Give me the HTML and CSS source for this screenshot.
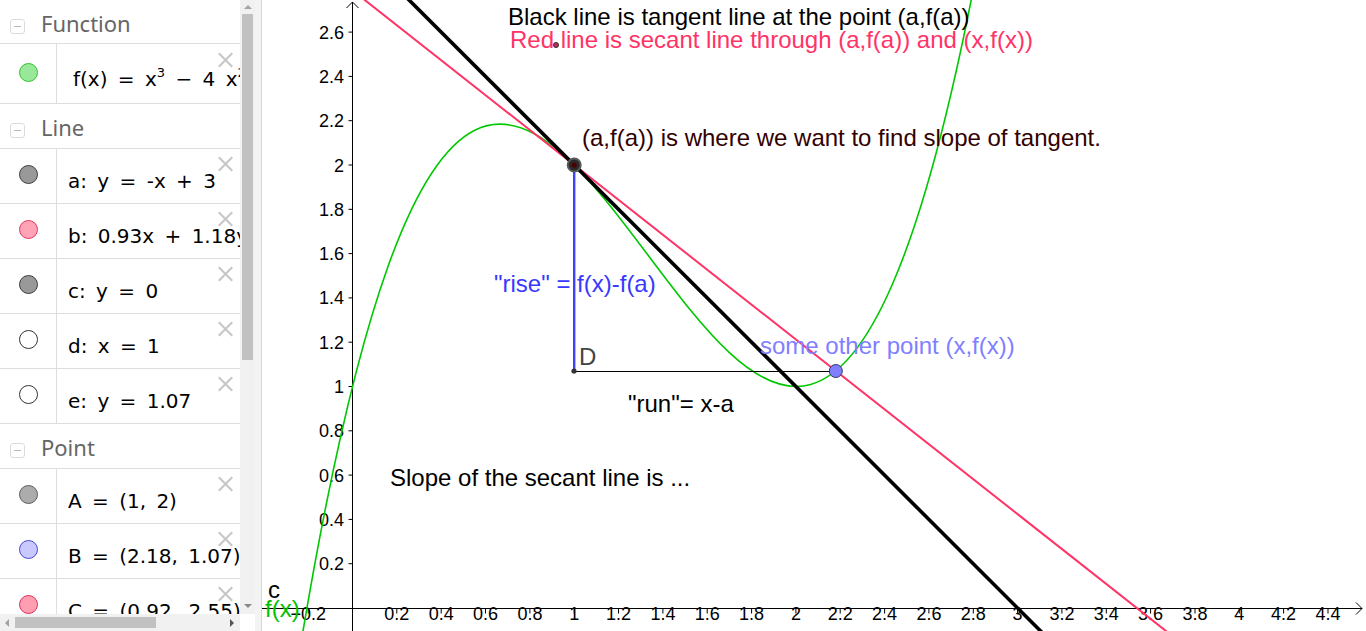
FILE: index.html
```html
<!DOCTYPE html>
<html lang="en">
<head>
<meta charset="utf-8">
<title>Tangent and secant</title>
<link rel="stylesheet" href="styles.css">
</head>
<body>
<div class="app">
  <div class="algebra">
    <div class="list">
      <div class="ghead first"><span class="toggle"></span><span class="gtitle">Function</span></div>
      <div class="item tall"><div class="marker"><span class="dot c-green"></span></div><div class="expr">f(x) = x<sup>3</sup> − 4 x<sup>2</sup> + 4 x + 1</div><span class="close"></span></div>

      <div class="ghead"><span class="toggle"></span><span class="gtitle">Line</span></div>
      <div class="item"><div class="marker"><span class="dot c-grey"></span></div><div class="expr">a: y = -x + 3</div><span class="close"></span></div>
      <div class="item"><div class="marker"><span class="dot c-pink"></span></div><div class="expr">b: 0.93x + 1.18y = 3.29</div><span class="close"></span></div>
      <div class="item"><div class="marker"><span class="dot c-grey"></span></div><div class="expr">c: y = 0</div><span class="close"></span></div>
      <div class="item"><div class="marker"><span class="dot c-hidden"></span></div><div class="expr">d: x = 1</div><span class="close"></span></div>
      <div class="item"><div class="marker"><span class="dot c-hidden"></span></div><div class="expr">e: y = 1.07</div><span class="close"></span></div>

      <div class="ghead"><span class="toggle"></span><span class="gtitle">Point</span></div>
      <div class="item"><div class="marker"><span class="dot c-lgrey"></span></div><div class="expr">A = (1, 2)</div><span class="close"></span></div>
      <div class="item"><div class="marker"><span class="dot c-blue"></span></div><div class="expr">B = (2.18, 1.07)</div><span class="close"></span></div>
      <div class="item"><div class="marker"><span class="dot c-rose"></span></div><div class="expr">C = (0.92, 2.55)</div><span class="close"></span></div>
    </div>
    <div class="vscroll"><span class="arr-up"></span><span class="vthumb"></span><span class="arr-down"></span></div>
    <div class="hscroll"><span class="arr-left"></span><span class="hthumb"></span><span class="arr-right"></span></div>
    <div class="corner"></div>
  </div>
  <div class="divider"></div>
  <div class="graphics">
    <svg class="plot" viewBox="262 0 1104 631" width="1104" height="631" xmlns="http://www.w3.org/2000/svg">
      <g class="axes">
        <line x1="262" y1="608.5" x2="1362" y2="608.5"/>
        <polyline points="1356,602.5 1362,608.5 1356,614.5"/>
        <line x1="352.5" y1="631" x2="352.5" y2="2"/>
        <polyline points="346.5,8 352.5,2 358.5,8"/>
        <path d="M348.5,563.7h4M348.5,519.4h4M348.5,475.1h4M348.5,430.8h4M348.5,386.5h4M348.5,342.2h4M348.5,297.9h4M348.5,253.6h4M348.5,209.3h4M348.5,165h4M348.5,120.7h4M348.5,76.4h4M348.5,32.1h4"/>
        <path d="M308.2,609v4.5M396.8,609v4.5M441.2,609v4.5M485.5,609v4.5M529.9,609v4.5M574.2,609v4.5M618.5,609v4.5M662.9,609v4.5M707.2,609v4.5M751.6,609v4.5M795.9,609v4.5M840.2,609v4.5M884.6,609v4.5M928.9,609v4.5M973.3,609v4.5M1017.6,609v4.5M1061.9,609v4.5M1106.3,609v4.5M1150.6,609v4.5M1195,609v4.5M1239.3,609v4.5M1283.6,609v4.5M1328,609v4.5"/>
      </g>
      <g class="ylabels">
        <text x="344" y="570.2">0.2</text>
        <text x="344" y="525.9">0.4</text>
        <text x="344" y="481.6">0.6</text>
        <text x="344" y="437.3">0.8</text>
        <text x="344" y="393">1</text>
        <text x="344" y="348.7">1.2</text>
        <text x="344" y="304.4">1.4</text>
        <text x="344" y="260.1">1.6</text>
        <text x="344" y="215.8">1.8</text>
        <text x="344" y="171.5">2</text>
        <text x="344" y="127.2">2.2</text>
        <text x="344" y="82.9">2.4</text>
        <text x="344" y="38.6">2.6</text>
      </g>
      <g class="xlabels">
        <text x="308.2" y="620">−0.2</text>
        <text x="396.8" y="620">0.2</text>
        <text x="441.2" y="620">0.4</text>
        <text x="485.5" y="620">0.6</text>
        <text x="529.9" y="620">0.8</text>
        <text x="574.2" y="620">1</text>
        <text x="618.5" y="620">1.2</text>
        <text x="662.9" y="620">1.4</text>
        <text x="707.2" y="620">1.6</text>
        <text x="751.6" y="620">1.8</text>
        <text x="795.9" y="620">2</text>
        <text x="840.2" y="620">2.2</text>
        <text x="884.6" y="620">2.4</text>
        <text x="928.9" y="620">2.6</text>
        <text x="973.3" y="620">2.8</text>
        <text x="1017.6" y="620">3</text>
        <text x="1061.9" y="620">3.2</text>
        <text x="1106.3" y="620">3.4</text>
        <text x="1150.6" y="620">3.6</text>
        <text x="1195" y="620">3.8</text>
        <text x="1239.3" y="620">4</text>
        <text x="1283.6" y="620">4.2</text>
        <text x="1328" y="620">4.4</text>
      </g>

      <path class="curve" d="M301.51,639.84 C525.43,-702.15 749.34,1135 973.26,-10.43"/>
      <line class="secant" x1="262" y1="-80.9" x2="1366" y2="788.5"/>
      <line class="tangent" x1="352.5" y1="-56.5" x2="1084.1" y2="674.5"/>
      <line class="rise" x1="574.2" y1="165" x2="574.2" y2="371"/>
      <line class="run" x1="574.2" y1="371.5" x2="835.8" y2="371.5"/>

      <circle class="pt-c" cx="556" cy="45" r="2.5"/>
      <circle class="pt-d" cx="574" cy="371" r="2.6"/>
      <circle class="pt-b" cx="835.8" cy="371" r="6.5"/>
      <circle class="pt-a" cx="574.2" cy="165" r="6.5"/>
      <circle class="pt-a-core" cx="574.2" cy="165" r="2.6"/>

      <text class="note t-black" x="508" y="25">Black line is tangent line at the point (a,f(a))</text>
      <text class="note t-red" x="510" y="48">Red line is secant line through (a,f(a)) and (x,f(x))</text>
      <text class="note t-maroon" x="582" y="146">(a,f(a)) is where we want to find slope of tangent.</text>
      <text class="note t-blue" x="494" y="292">"rise" = f(x)-f(a)</text>
      <text class="note t-dgrey" x="579" y="365">D</text>
      <text class="note t-violet" x="760" y="354">some other point (x,f(x))</text>
      <text class="note t-black" x="628" y="412">"run"= x-a</text>
      <text class="note t-black" x="390" y="486">Slope of the secant line is ...</text>
      <text class="note t-black" x="268" y="598">c</text>
      <text class="note t-green" x="265" y="617">f(x)</text>
    </svg>
  </div>
</div>
</body>
</html>
```

FILE: styles.css
```css
html, body {
  margin: 0;
  padding: 0;
  background: #ffffff;
  overflow: hidden;
}

body {
  font-family: "DejaVu Sans", "Liberation Sans", sans-serif;
}

.app {
  display: flex;
  width: 1366px;
  height: 631px;
}

/* ---------- Algebra view ---------- */
.algebra {
  flex: none;
  display: grid;
  grid-template-columns: 240px 15px;
  grid-template-rows: 614px 17px;
}

.list {
  overflow: hidden;
  background: #ffffff;
}

.ghead {
  height: 45px;
  box-sizing: border-box;
  border-bottom: 1px solid #dedede;
  display: flex;
  align-items: flex-start;
}

.ghead.first {
  height: 44px;
}

.toggle {
  position: relative;
  flex: none;
  width: 15px;
  height: 15px;
  box-sizing: border-box;
  margin: 19px 0 0 10px;
  border: 1px solid #dcdcdc;
  border-radius: 3px;
}

.toggle::after {
  content: "";
  position: absolute;
  left: 3px;
  top: 6px;
  width: 7px;
  height: 1px;
  background: #b8b8b8;
}

.gtitle {
  margin: 8px 0 0 16px;
  font-family: "Noto Sans", "Open Sans", sans-serif;
  font-size: 22px;
  line-height: 30px;
  color: #666666;
}

.item {
  position: relative;
  display: flex;
  height: 55px;
  box-sizing: border-box;
  border-bottom: 1px solid #dedede;
}

.item.tall {
  height: 60px;
}

.marker {
  flex: none;
  width: 56px;
  border-right: 1px solid #dedede;
  display: flex;
  justify-content: center;
}

.dot {
  width: 19px;
  height: 19px;
  box-sizing: border-box;
  border-radius: 50%;
  border: 1px solid #444;
  margin-top: 16px;
}

.tall .dot {
  margin-top: 19px;
}

.c-green  { background: #99e899; border-color: #2ec42e; }
.c-grey   { background: #999999; border-color: #3c3c3c; }
.c-pink   { background: #ffa3b6; border-color: #e8355e; }
.c-hidden { background: #ffffff; border-color: #333333; }
.c-lgrey  { background: #acacac; border-color: #5c5c5c; }
.c-blue   { background: #c9c9ff; border-color: #4848d0; }
.c-rose   { background: #ff9db1; border-color: #e0305a; }

.expr {
  flex: none;
  padding: 20px 0 0 11px;
  font-size: 20px;
  line-height: 24px;
  white-space: nowrap;
  word-spacing: 4px;
  color: #000000;
}

.tall .expr {
  padding-top: 23px;
  padding-left: 16px;
}

.expr sup {
  font-size: 13px;
  line-height: 0;
  vertical-align: 9px;
  word-spacing: normal;
}

.close {
  position: absolute;
  left: 218px;
  top: 7px;
  width: 15px;
  height: 15px;
}

.tall .close {
  top: 8px;
}

.close::before,
.close::after {
  content: "";
  position: absolute;
  left: -2px;
  top: 6.5px;
  width: 19px;
  height: 2px;
  background: #c6c6c6;
  transform: rotate(45deg);
}

.close::after {
  transform: rotate(-45deg);
}

/* scrollbars */
.vscroll {
  background: #f1f1f1;
  display: flex;
  flex-direction: column;
  align-items: center;
}

.arr-up {
  margin-top: 5px;
  width: 0;
  height: 0;
  border-left: 4px solid transparent;
  border-right: 4px solid transparent;
  border-bottom: 4px solid #a3a3a3;
}

.vthumb {
  margin-top: 5px;
  width: 11px;
  height: 346px;
  background: #c1c1c1;
}

.arr-down {
  margin-top: auto;
  margin-bottom: 6px;
  width: 0;
  height: 0;
  border-left: 4px solid transparent;
  border-right: 4px solid transparent;
  border-top: 4px solid #8a8a8a;
}

.hscroll {
  background: #f1f1f1;
  display: flex;
  align-items: center;
}

.arr-left {
  margin-left: 5px;
  width: 0;
  height: 0;
  border-top: 4px solid transparent;
  border-bottom: 4px solid transparent;
  border-right: 4px solid #a3a3a3;
}

.hthumb {
  margin-left: 6px;
  width: 141px;
  height: 11px;
  background: #c1c1c1;
}

.arr-right {
  margin-left: auto;
  margin-right: 6px;
  width: 0;
  height: 0;
  border-top: 4px solid transparent;
  border-bottom: 4px solid transparent;
  border-left: 4px solid #555555;
}

.corner {
  background: #ffffff;
}

.divider {
  flex: none;
  width: 6px;
  background: #f3f3f3;
  border-right: 1px solid #d6d6d6;
}

/* ---------- Graphics view ---------- */
.graphics {
  flex: 1;
  overflow: hidden;
  background: #ffffff;
}

.plot {
  display: block;
}

.axes line,
.axes polyline,
.axes path {
  stroke: #000000;
  stroke-width: 1;
  fill: none;
}

.ylabels text,
.xlabels text {
  font-family: "Liberation Sans", Arial, sans-serif;
  font-size: 18px;
  fill: #000000;
}

.ylabels text {
  text-anchor: end;
}

.xlabels text {
  text-anchor: middle;
}

.curve {
  fill: none;
  stroke: #00c800;
  stroke-width: 1.6;
}

.secant {
  stroke: #ff3366;
  stroke-width: 2;
}

.tangent {
  stroke: #000000;
  stroke-width: 3.6;
}

.rise {
  stroke: #4040ff;
  stroke-width: 2.4;
}

.run {
  stroke: #000000;
  stroke-width: 1;
}

.pt-a {
  fill: #2a2a2a;
  stroke: #5a5a5a;
  stroke-width: 2;
}

.pt-a-core {
  fill: #4a0000;
}

.pt-b {
  fill: #7f7fff;
  stroke: #33336a;
  stroke-width: 1;
}

.pt-c {
  fill: #c03050;
  stroke: #2a2a2a;
  stroke-width: 1;
}

.pt-d {
  fill: #333333;
}

.note {
  font-family: "Liberation Sans", Arial, sans-serif;
  font-size: 24px;
}

.t-black  { fill: #000000; }
.t-red    { fill: #ff3366; }
.t-maroon { fill: #330000; }
.t-blue   { fill: #3838ff; }
.t-dgrey  { fill: #444444; }
.t-violet { fill: #7f7fff; }
.t-green  { fill: #00c000; }
```
